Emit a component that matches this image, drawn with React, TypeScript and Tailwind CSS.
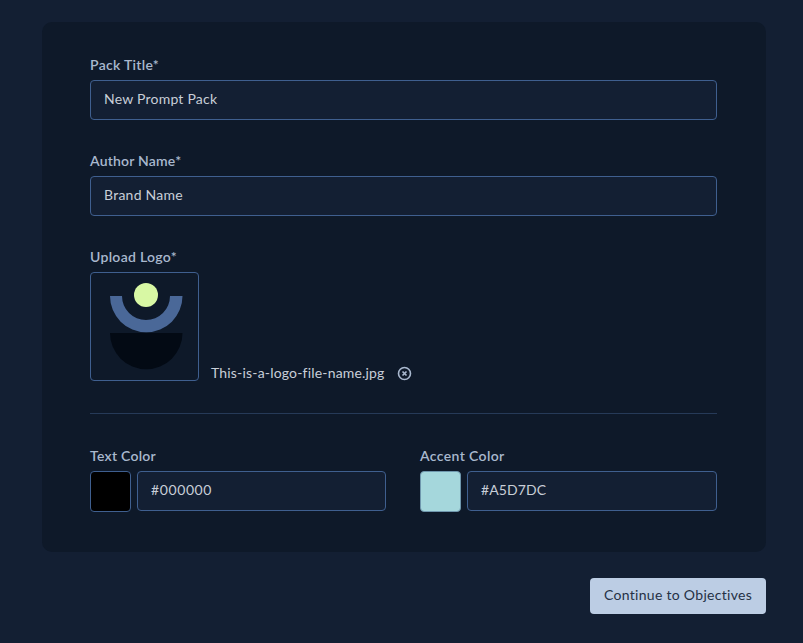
export default function App() {
  const font = { fontFamily: "Lato, 'Open Sans', sans-serif" };
  return (
    <div style={font} className="h-[643px] w-[803px] overflow-hidden bg-[#131f33] pt-[22px] pl-[42px]">
      <div className="h-[530px] w-[724px] rounded-[10px] bg-[#0e1929] pt-[33px] pl-[48px] pr-[49px]">
        <div className="flex h-[25px] items-start text-[14px] leading-[20px] font-semibold tracking-[0.3px] text-[#a9b8ce]">Pack Title*</div>
        <div className="flex h-[40px] items-center rounded-[4px] border border-[#3f5f8f] bg-[#131f33] pb-[3px] pl-[13px] text-[14px] tracking-[0.22px] text-[#c8ced8]">New Prompt Pack</div>
        <div className="mt-[31px] flex h-[25px] items-start text-[14px] leading-[20px] font-semibold tracking-[0.2px] text-[#a9b8ce]">Author Name*</div>
        <div className="flex h-[40px] items-center rounded-[4px] border border-[#3f5f8f] bg-[#131f33] pb-[3px] pl-[13px] text-[14px] tracking-[0.25px] text-[#c8ced8]">Brand Name</div>
        <div className="mt-[31px] flex h-[25px] items-start text-[14px] leading-[20px] font-semibold tracking-[0.3px] text-[#a9b8ce]">Upload Logo*</div>
        <div className="flex items-end">
          <div className="h-[109px] w-[109px] rounded-[4px] border border-[#3f5f8f]">
            <svg width="107" height="107" viewBox="0 0 107 107">
              <circle cx="55" cy="22" r="12" fill="#d8f8a4" />
              <path d="M19 23H31A24 24 0 0 0 79 23H91.500A36.250 36.250 0 0 1 19 23Z" fill="#4a6898" />
              <path d="M19 60H91.500A36.250 36.250 0 0 1 19 60Z" fill="#030a14" />
            </svg>
          </div>
          <span className="ml-[12px] text-[14px] leading-[16px] tracking-[0.18px] text-[#c8ced8]">This-is-a-logo-file-name.jpg</span>
          <svg className="ml-[12px]" width="15" height="15" viewBox="0 0 15 15" fill="none" stroke="#a9b8ce">
            <circle cx="7.500" cy="7.500" r="6" strokeWidth="1.600" />
            <path d="M5.500 5.500L9.500 9.500M9.500 5.500L5.500 9.500" strokeWidth="1.700" />
          </svg>
        </div>
        <div className="mt-[32px] h-px bg-[#263a58]" />
        <div className="mt-[34px] flex gap-[34px]">
          <div className="w-[296px]">
            <div className="flex h-[23px] items-start text-[14px] leading-[15px] font-semibold tracking-[0.25px] text-[#a9b8ce]">Text Color</div>
            <div className="flex gap-[6px]">
              <div className="h-[41px] w-[41px] rounded-[4px] border border-[#3f5f8f] bg-black" />
              <div className="flex h-[40px] flex-1 items-center rounded-[4px] border border-[#3f5f8f] bg-[#131f33] pb-[3px] pl-[13px] text-[14px] tracking-[0.6px] text-[#c8ced8]">#000000</div>
            </div>
          </div>
          <div className="flex-1">
            <div className="flex h-[23px] items-start text-[14px] leading-[15px] font-semibold tracking-[0.38px] text-[#a9b8ce]">Accent Color</div>
            <div className="flex gap-[6px]">
              <div className="h-[41px] w-[41px] rounded-[4px] border border-[#6f97ad] bg-[#a5d7dc]" />
              <div className="flex h-[40px] flex-1 items-center rounded-[4px] border border-[#3f5f8f] bg-[#131f33] pb-[3px] pl-[13px] text-[14px] tracking-[0.1px] text-[#c8ced8]">#A5D7DC</div>
            </div>
          </div>
        </div>
      </div>
      <div className="mt-[26px] flex w-[724px] justify-end">
        <div className="flex h-[36px] w-[176px] items-center justify-center rounded-[4px] bg-[#bccde4] pb-[3px] text-[14px] tracking-[0.3px] text-[#253146]">Continue to Objectives</div>
      </div>
    </div>
  );
}
